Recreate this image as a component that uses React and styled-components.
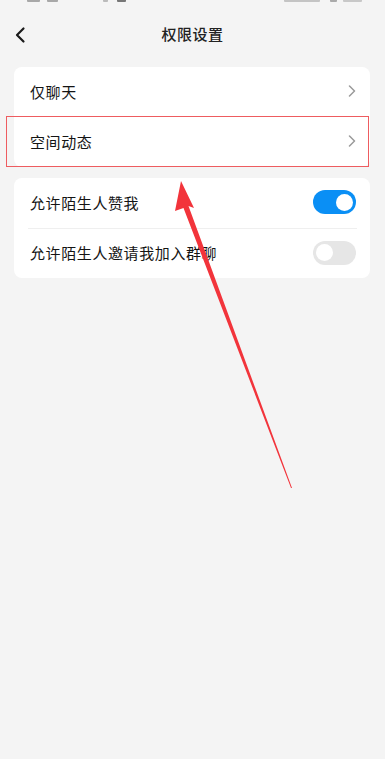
import styled, { createGlobalStyle } from "styled-components";

const GlobalStyle = createGlobalStyle`
  html, body {
    margin: 0;
    padding: 0;
    background: #f4f4f4;
    font-family: "Noto Sans CJK SC", "Noto Sans", sans-serif;
  }
`;

const Page = styled.div`
  position: relative;
  width: 385px;
  height: 759px;
  background: #f4f4f4;
  overflow: hidden;
`;

const StatusBar = styled.div`
  height: 8px;
  display: flex;
  align-items: flex-start;
  padding: 0 23px 0 27px;
`;

const StatusBit = styled.span`
  display: block;
  width: ${(p) => p.w}px;
  height: 2px;
  margin-left: ${(p) => p.gap || 0}px;
  background: ${(p) => p.c || "#a8a8a8"};
  border-radius: 0 0 1px 1px;
`;

const Header = styled.div`
  position: relative;
  height: 50px;
  display: flex;
  align-items: center;
  justify-content: center;
`;

const Back = styled.div`
  position: absolute;
  left: 13px;
  top: 17px;
  width: 16px;
  height: 18px;
`;

const Title = styled.h1`
  margin: 0;
  font-size: 15px;
  font-weight: 500;
  color: #222;
  letter-spacing: 0.5px;
`;

const Content = styled.div`
  padding: 9px 15px 0 14px;
  display: flex;
  flex-direction: column;
  gap: 11px;
`;

const Card = styled.div`
  background: #fff;
  border-radius: 8px;
`;

const Row = styled.div`
  position: relative;
  height: 50px;
  display: flex;
  align-items: center;
  justify-content: space-between;
  box-sizing: border-box;
  padding: 0 ${(p) => (p.divider ? "1px" : "14px")} 2px ${(p) => (p.divider ? "2px" : "16px")};
  margin: ${(p) => (p.divider ? "0 13px 0 14px" : "0")};
  border-top: ${(p) => (p.divider ? "1px solid #efefef" : "none")};
`;

const Label = styled.span`
  font-size: 15px;
  color: #141414;
  letter-spacing: 0.6px;
`;

const Highlight = styled.div`
  position: absolute;
  left: -8px;
  right: 1px;
  top: -1px;
  bottom: 0px;
  border: 1.5px solid #ee5c60;
  pointer-events: none;
`;

const Toggle = styled.div`
  position: relative;
  width: 43px;
  height: 24px;
  border-radius: 12px;
  background: ${(p) => (p.on ? "#0a8ff5" : "#e6e6e6")};
`;

const Knob = styled.div`
  position: absolute;
  top: 3.5px;
  left: ${(p) => (p.on ? "23px" : "3px")};
  width: 17px;
  height: 17px;
  border-radius: 50%;
  background: #fff;
`;

const ArrowLayer = styled.svg`
  position: absolute;
  left: 0;
  top: 0;
  pointer-events: none;
`;

function Chevron() {
  return (
    <svg width="8" height="12" viewBox="0 0 8 12">
      <path d="M1.5 1 L6.5 6 L1.5 11" fill="none" stroke="#9a9a9a" strokeWidth="1.5" strokeLinecap="round" strokeLinejoin="round" />
    </svg>
  );
}

function Switch({ on }) {
  return (
    <Toggle on={on ? 1 : 0}>
      <Knob on={on ? 1 : 0} />
    </Toggle>
  );
}

export default function App() {
  return (
    <>
      <GlobalStyle />
      <Page>
        <StatusBar>
          <StatusBit w={13} />
          <StatusBit w={11} gap={7} />
          <StatusBit w={5} gap={45} c="#bbb" />
          <StatusBit w={9} gap={9} c="#777" />
          <div style={{ flex: 1 }} />
          <StatusBit w={36} c="#c4c4c4" />
          <StatusBit w={7} gap={10} c="#aaa" />
          <StatusBit w={19} gap={6} c="#c8c8c8" />
        </StatusBar>
        <Header>
          <Back>
            <svg width="16" height="18" viewBox="0 0 16 18">
              <path d="M10.5 2.5 L4 9 L10.5 15.5" fill="none" stroke="#1a1a1a" strokeWidth="2.2" strokeLinecap="round" strokeLinejoin="round" />
            </svg>
          </Back>
          <Title>权限设置</Title>
        </Header>
        <Content>
          <Card>
            <Row>
              <Label>仅聊天</Label>
              <Chevron />
            </Row>
            <Row>
              <Label>空间动态</Label>
              <Chevron />
              <Highlight />
            </Row>
          </Card>
          <Card>
            <Row>
              <Label>允许陌生人赞我</Label>
              <Switch on />
            </Row>
            <Row divider>
              <Label>允许陌生人邀请我加入群聊</Label>
              <Switch />
            </Row>
          </Card>
        </Content>
        <ArrowLayer width="385" height="759" viewBox="0 0 385 759">
          <polygon
            points="181,181 194,208 188.5,206 292,488 291,488 183.5,208 175,211"
            fill="#f2343b"
          />
        </ArrowLayer>
      </Page>
    </>
  );
}
